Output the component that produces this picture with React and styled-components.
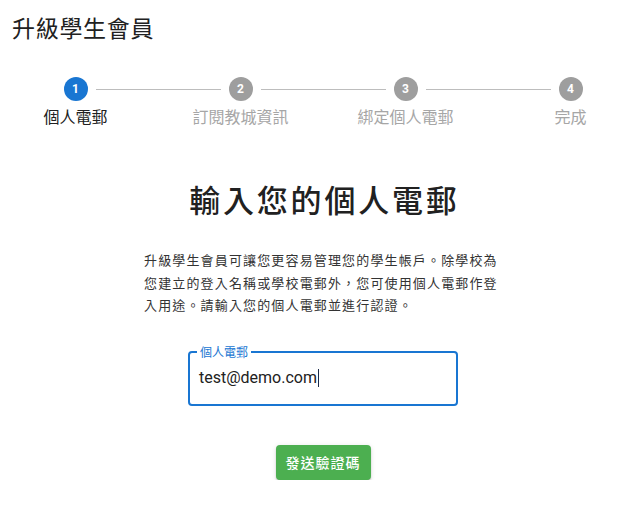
import React from "react";
import styled, { createGlobalStyle } from "styled-components";

const GlobalStyle = createGlobalStyle`
  html, body {
    margin: 0;
    padding: 0;
    background: #ffffff;
    overflow: hidden;
  }
  body {
    font-family: "Noto Sans CJK TC", "Noto Sans", sans-serif;
    color: #212121;
  }
`;

const Page = styled.div`
  width: 646px;
  display: flex;
  flex-direction: column;
`;

const Title = styled.h1`
  margin: 11px 0 0 12px;
  font-size: 23px;
  line-height: 32px;
  font-weight: 400;
  letter-spacing: 0.7px;
  color: #212121;
`;

const Stepper = styled.div`
  display: flex;
  margin: 34px -7px 0;
  width: 660px;
`;

const Step = styled.div`
  flex: 1;
  display: flex;
  flex-direction: column;
  align-items: center;
  position: relative;

  &:not(:first-child)::before {
    content: "";
    position: absolute;
    top: 12px;
    left: calc(-50% + 20px);
    right: calc(50% + 20px);
    border-top: 1px solid #bdbdbd;
  }
`;

const StepIcon = styled.div`
  width: 24px;
  height: 24px;
  border-radius: 50%;
  background: ${(p) => (p.$active ? "#1976d2" : "#9e9e9e")};
  color: #ffffff;
  font-family: Roboto, "Liberation Sans", sans-serif;
  font-size: 12px;
  font-weight: 700;
  display: flex;
  align-items: center;
  justify-content: center;
`;

const StepLabel = styled.div`
  margin-top: 4px;
  font-size: 16px;
  line-height: 22px;
  color: ${(p) => (p.$active ? "#212121" : "#a6a6a6")};
`;

const Heading = styled.h2`
  margin: 52px 0 0;
  text-align: center;
  font-size: 31px;
  line-height: 40px;
  font-weight: 500;
  letter-spacing: 2.8px;
  padding-left: 2.8px;
  color: #212121;
`;

const Paragraph = styled.p`
  width: 358px;
  margin: 30px auto 0;
  font-size: 13px;
  line-height: 22.5px;
  letter-spacing: 1.15px;
  color: #333333;
`;

const Field = styled.div`
  position: relative;
  box-sizing: border-box;
  width: 270px;
  height: 55px;
  margin: 34px auto 0;
  padding: 0 9px;
  border: 2px solid #1976d2;
  border-radius: 4px;
  display: flex;
  align-items: center;
`;

const FieldLabel = styled.span`
  position: absolute;
  top: -8px;
  left: 7px;
  padding: 0 3px;
  background: #ffffff;
  font-size: 12px;
  line-height: 14px;
  color: #1976d2;
`;

const Value = styled.div`
  font-family: Roboto, "Liberation Sans", sans-serif;
  font-size: 16px;
  line-height: 20px;
  color: #212121;
  display: flex;
  align-items: center;
`;

const Caret = styled.span`
  display: inline-block;
  width: 1px;
  height: 18px;
  background: #1a2a4a;
  margin-left: 1px;
`;

const Actions = styled.div`
  display: flex;
  justify-content: center;
  margin-top: 39px;
`;

const Button = styled.button`
  height: 35px;
  padding: 0 10px;
  border: none;
  border-radius: 4px;
  background: #4caf50;
  color: #ffffff;
  font-family: "Noto Sans CJK TC", sans-serif;
  font-size: 14px;
  font-weight: 500;
  letter-spacing: 1px;
  box-shadow: 0 3px 1px -2px rgba(0, 0, 0, 0.2), 0 2px 2px 0 rgba(0, 0, 0, 0.14),
    0 1px 5px 0 rgba(0, 0, 0, 0.12);
  cursor: pointer;
`;

const steps = ["個人電郵", "訂閱教城資訊", "綁定個人電郵", "完成"];

export default function App() {
  return (
    <>
      <GlobalStyle />
      <Page lang="zh-Hant">
        <Title>升級學生會員</Title>
        <Stepper>
          {steps.map((label, i) => (
            <Step key={label}>
              <StepIcon $active={i === 0}>{i + 1}</StepIcon>
              <StepLabel $active={i === 0}>{label}</StepLabel>
            </Step>
          ))}
        </Stepper>
        <Heading>輸入您的個人電郵</Heading>
        <Paragraph>
          升級學生會員可讓您更容易管理您的學生帳戶。除學校為您建立的登入名稱或學校電郵外，您可使用個人電郵作登入用途。請輸入您的個人電郵並進行認證。
        </Paragraph>
        <Field>
          <FieldLabel>個人電郵</FieldLabel>
          <Value>
            test@demo.com
            <Caret />
          </Value>
        </Field>
        <Actions>
          <Button>發送驗證碼</Button>
        </Actions>
      </Page>
    </>
  );
}
